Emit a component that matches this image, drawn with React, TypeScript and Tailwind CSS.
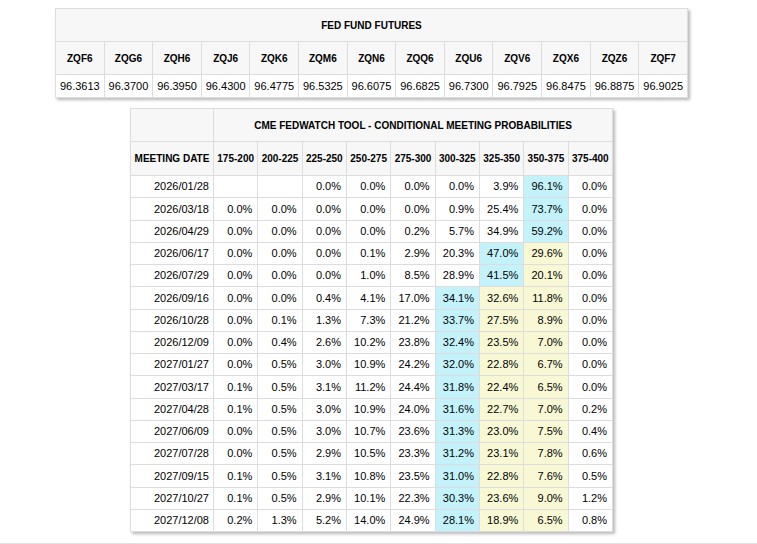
import React from "react";

const tickers = [
  ["ZQF6", "96.3613"],
  ["ZQG6", "96.3700"],
  ["ZQH6", "96.3950"],
  ["ZQJ6", "96.4300"],
  ["ZQK6", "96.4775"],
  ["ZQM6", "96.5325"],
  ["ZQN6", "96.6075"],
  ["ZQQ6", "96.6825"],
  ["ZQU6", "96.7300"],
  ["ZQV6", "96.7925"],
  ["ZQX6", "96.8475"],
  ["ZQZ6", "96.8875"],
  ["ZQF7", "96.9025"],
];

const ranges = [
  "175-200",
  "200-225",
  "225-250",
  "250-275",
  "275-300",
  "300-325",
  "325-350",
  "350-375",
  "375-400",
];

// c = cyan index, y = yellow indices
const rows: { d: string; v: string[]; c: number; y: number[] }[] = [
  { d: "2026/01/28", v: ["", "", "0.0", "0.0", "0.0", "0.0", "3.9", "96.1", "0.0"], c: 7, y: [] },
  { d: "2026/03/18", v: ["0.0", "0.0", "0.0", "0.0", "0.0", "0.9", "25.4", "73.7", "0.0"], c: 7, y: [] },
  { d: "2026/04/29", v: ["0.0", "0.0", "0.0", "0.0", "0.2", "5.7", "34.9", "59.2", "0.0"], c: 7, y: [] },
  { d: "2026/06/17", v: ["0.0", "0.0", "0.0", "0.1", "2.9", "20.3", "47.0", "29.6", "0.0"], c: 6, y: [7] },
  { d: "2026/07/29", v: ["0.0", "0.0", "0.0", "1.0", "8.5", "28.9", "41.5", "20.1", "0.0"], c: 6, y: [7] },
  { d: "2026/09/16", v: ["0.0", "0.0", "0.4", "4.1", "17.0", "34.1", "32.6", "11.8", "0.0"], c: 5, y: [6, 7] },
  { d: "2026/10/28", v: ["0.0", "0.1", "1.3", "7.3", "21.2", "33.7", "27.5", "8.9", "0.0"], c: 5, y: [6, 7] },
  { d: "2026/12/09", v: ["0.0", "0.4", "2.6", "10.2", "23.8", "32.4", "23.5", "7.0", "0.0"], c: 5, y: [6, 7] },
  { d: "2027/01/27", v: ["0.0", "0.5", "3.0", "10.9", "24.2", "32.0", "22.8", "6.7", "0.0"], c: 5, y: [6, 7] },
  { d: "2027/03/17", v: ["0.1", "0.5", "3.1", "11.2", "24.4", "31.8", "22.4", "6.5", "0.0"], c: 5, y: [6, 7] },
  { d: "2027/04/28", v: ["0.1", "0.5", "3.0", "10.9", "24.0", "31.6", "22.7", "7.0", "0.2"], c: 5, y: [6, 7] },
  { d: "2027/06/09", v: ["0.0", "0.5", "3.0", "10.7", "23.6", "31.3", "23.0", "7.5", "0.4"], c: 5, y: [6, 7] },
  { d: "2027/07/28", v: ["0.0", "0.5", "2.9", "10.5", "23.3", "31.2", "23.1", "7.8", "0.6"], c: 5, y: [6, 7] },
  { d: "2027/09/15", v: ["0.1", "0.5", "3.1", "10.8", "23.5", "31.0", "22.8", "7.6", "0.5"], c: 5, y: [6, 7] },
  { d: "2027/10/27", v: ["0.1", "0.5", "2.9", "10.1", "22.3", "30.3", "23.6", "9.0", "1.2"], c: 5, y: [6, 7] },
  { d: "2027/12/08", v: ["0.2", "1.3", "5.2", "14.0", "24.9", "28.1", "18.9", "6.5", "0.8"], c: 5, y: [6, 7] },
];

export default function App() {
  return (
    <div
      className="w-[757px] h-[544px] overflow-hidden bg-white text-black"
      style={{ fontFamily: '"Liberation Sans", Arial, sans-serif' }}
    >
      <div className="w-[743px] h-[543px] flex flex-col items-center pt-[8px]">
        <table className="table-fixed border-collapse w-[633px] shadow-[2px_2px_3px_rgba(0,0,0,0.28)]">
          <tbody>
            <tr className="h-[33px]">
              <th
                colSpan={13}
                className="border border-[#dddddd] bg-[#f7f7f7] text-[10px] font-bold text-center"
              >
                FED FUND FUTURES
              </th>
            </tr>
            <tr className="h-[33px]">
              {tickers.map(([t]) => (
                <th
                  key={t}
                  className="border border-[#dddddd] bg-[#f7f7f7] text-[10px] font-bold text-center"
                >
                  {t}
                </th>
              ))}
            </tr>
            <tr className="h-[23px]">
              {tickers.map(([t, v]) => (
                <td
                  key={t}
                  className="border border-[#dddddd] bg-white text-[11px] text-center p-0"
                >
                  {v}
                </td>
              ))}
            </tr>
          </tbody>
        </table>

        <table className="mt-[10px] table-fixed border-collapse w-[483px] shadow-[2px_2px_3px_rgba(0,0,0,0.28)]">
          <colgroup>
            <col className="w-[83px]" />
            {ranges.map((r) => (
              <col key={r} />
            ))}
          </colgroup>
          <tbody>
            <tr className="h-[33px]">
              <th className="border border-[#dddddd] bg-[#f7f7f7]"></th>
              <th
                colSpan={9}
                className="border border-[#dddddd] bg-[#f7f7f7] text-[10px] font-bold text-center"
              >
                CME FEDWATCH TOOL - CONDITIONAL MEETING PROBABILITIES
              </th>
            </tr>
            <tr className="h-[34px]">
              <th className="border border-[#dddddd] bg-[#f7f7f7] text-[10px] font-bold text-center whitespace-nowrap p-0">
                MEETING DATE
              </th>
              {ranges.map((r) => (
                <th
                  key={r}
                  className="border border-[#dddddd] bg-[#f7f7f7] text-[10px] font-bold text-center whitespace-nowrap p-0"
                >
                  {r}
                </th>
              ))}
            </tr>
            {rows.map((row) => (
              <tr key={row.d} className="h-[22.25px]">
                <td className="border border-[#dddddd] bg-white text-[11px] text-right pr-[4px] pl-0 py-0">
                  {row.d}
                </td>
                {row.v.map((v, i) => {
                  const bg =
                    i === row.c
                      ? "bg-[#c3f2fb]"
                      : row.y.includes(i)
                      ? "bg-[#f8f8d5]"
                      : "bg-white";
                  return (
                    <td
                      key={i}
                      className={`border border-[#dddddd] ${bg} text-[11px] text-right pr-[5px] pl-0 py-0`}
                    >
                      {v ? `${v}%` : ""}
                    </td>
                  );
                })}
              </tr>
            ))}
          </tbody>
        </table>
      </div>
      <div className="w-full border-t border-[#e2e2e2]"></div>
    </div>
  );
}
